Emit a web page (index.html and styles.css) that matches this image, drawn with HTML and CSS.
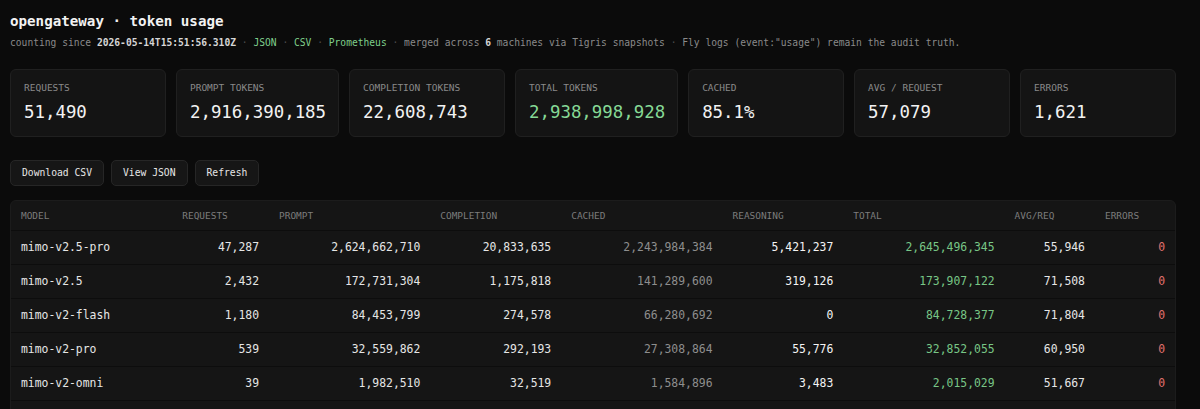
FILE: index.html
```html
<!DOCTYPE html>
<html lang="en">
<head>
  <meta charset="UTF-8" />
  <meta name="viewport" content="width=device-width, initial-scale=1" />
  <title>opengateway · token usage</title>
  <link rel="stylesheet" href="styles.css">
</head>
<body>
<div class="container">
  <h1>opengateway · token usage</h1>
  <p class="meta">
    counting since <b>2026-05-14T15:51:56.310Z</b> <span class="dot">·</span>
    <a href="#">JSON</a> <span class="dot">·</span>
    <a href="#">CSV</a> <span class="dot">·</span>
    <a href="#">Prometheus</a> <span class="dot">·</span>
    merged across <b>6</b> machines via Tigris snapshots <span class="dot">·</span>
    Fly logs (event:"usage") remain the audit truth.
  </p>

  <!-- Totals -->
  <div class="stats">
    <div class="stat"><div class="label">Requests</div><div class="value">51,490</div></div>
    <div class="stat"><div class="label">Prompt tokens</div><div class="value">2,916,390,185</div></div>
    <div class="stat"><div class="label">Completion tokens</div><div class="value">22,608,743</div></div>
    <div class="stat"><div class="label">Total tokens</div><div class="value green">2,938,998,928</div></div>
    <div class="stat"><div class="label">Cached</div><div class="value">85.1%</div></div>
    <div class="stat"><div class="label">Avg / request</div><div class="value">57,079</div></div>
    <div class="stat"><div class="label">Errors</div><div class="value">1,621</div></div>
  </div>

  <!-- Actions -->
  <div class="actions">
    <button>Download CSV</button>
    <button>View JSON</button>
    <button>Refresh</button>
  </div>

  <!-- Per model -->
  <div class="table-wrap">
    <table>
      <thead>
        <tr><th>MODEL</th><th>REQUESTS</th><th>PROMPT</th><th>COMPLETION</th><th>CACHED</th><th>REASONING</th><th>TOTAL</th><th>AVG/REQ</th><th>ERRORS</th></tr>
      </thead>
      <tbody>
        <tr><td class="model">mimo-v2.5-pro</td><td>47,287</td><td>2,624,662,710</td><td>20,833,635</td><td class="cached">2,243,984,384</td><td class="reason">5,421,237</td><td class="total">2,645,496,345</td><td>55,946</td><td class="err">0</td></tr>
        <tr><td class="model">mimo-v2.5</td><td>2,432</td><td>172,731,304</td><td>1,175,818</td><td class="cached">141,289,600</td><td class="reason">319,126</td><td class="total">173,907,122</td><td>71,508</td><td class="err">0</td></tr>
        <tr><td class="model">mimo-v2-flash</td><td>1,180</td><td>84,453,799</td><td>274,578</td><td class="cached">66,280,692</td><td class="reason">0</td><td class="total">84,728,377</td><td>71,804</td><td class="err">0</td></tr>
        <tr><td class="model">mimo-v2-pro</td><td>539</td><td>32,559,862</td><td>292,193</td><td class="cached">27,308,864</td><td class="reason">55,776</td><td class="total">32,852,055</td><td>60,950</td><td class="err">0</td></tr>
        <tr><td class="model">mimo-v2-omni</td><td>39</td><td>1,982,510</td><td>32,519</td><td class="cached">1,584,896</td><td class="reason">3,483</td><td class="total">2,015,029</td><td>51,667</td><td class="err">0</td></tr>
        <tr class="spacer"><td colspan="9">&nbsp;</td></tr>
      </tbody>
    </table>
  </div>
</div>
</body>
</html>
```

FILE: styles.css
```css
* {
  box-sizing: border-box;
}
body {
  margin: 0;
  background: #0b0b0b;
  color: #e8e8e8;
  font-family: "DejaVu Sans Mono", "Liberation Mono", monospace;
}
.container {
  width: 1186px;
  padding: 12px 10px;
}
h1 {
  margin: 0;
  font-size: 14.2px;
  line-height: 18px;
  font-weight: bold;
  color: #f2f2f2;
}
.meta {
  margin: 6px 0 0;
  font-size: 9.65px;
  line-height: 14px;
  color: #8a8a8a;
  white-space: nowrap;
}
.meta b {
  color: #d6d6d6;
}
.meta a {
  color: #7fcf8c;
  text-decoration: none;
}
.meta .dot {
  color: #4d4d4d;
}
.stats {
  display: grid;
  grid-template-columns: repeat(7, 1fr);
  gap: 10px;
  margin-top: 19px;
}
.stat {
  background: #141414;
  border: 1px solid #202020;
  border-radius: 6px;
  padding: 11px 12px 13px 13px;
}
.stat .label {
  font-size: 9.5px;
  line-height: 14px;
  color: #8a8a8a;
  text-transform: uppercase;
}
.stat .value {
  margin-top: 6px;
  font-size: 17.4px;
  line-height: 22px;
  color: #f2f2f2;
  white-space: nowrap;
}
.stat .value.green {
  color: #86d996;
}
.actions {
  display: flex;
  gap: 7px;
  margin-top: 23px;
}
button {
  font-family: inherit;
  font-size: 9.7px;
  line-height: 12px;
  padding: 6px 11px;
  background: #161616;
  color: #e6e6e6;
  border: 1px solid #262626;
  border-radius: 5px;
  cursor: pointer;
}
button:hover {
  background: #1f1f1f;
}
.table-wrap {
  margin-top: 14px;
  background: #151515;
  border: 1px solid #1c1c1c;
  border-radius: 6px;
  overflow: hidden;
}
table {
  width: 100%;
  border-collapse: collapse;
}
th {
  text-align: left;
  font-weight: normal;
  font-size: 9.45px;
  line-height: 11px;
  color: #7c7c7c;
  padding: 9px 10px 9px;
  border-bottom: 1px solid #0d0d0d;
}
td {
  text-align: right;
  font-size: 11.4px;
  line-height: 13px;
  padding: 10px 10px;
  border-bottom: 1px solid #0d0d0d;
  color: #e6e6e6;
  white-space: nowrap;
}
td.model {
  text-align: left;
}
td.cached {
  color: #8e8e8e;
}
td.reason {
  color: #f4f4f4;
}
td.total {
  color: #78c686;
}
td.err {
  color: #e0706c;
}
```
